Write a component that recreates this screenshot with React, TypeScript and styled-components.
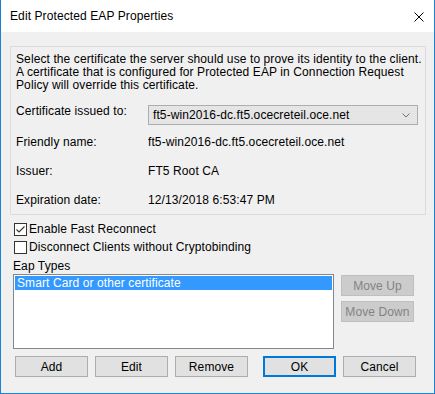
import React from "react";
import styled, { createGlobalStyle } from "styled-components";

const Global = createGlobalStyle`
  html, body { margin: 0; padding: 0; background: #ffffff; }
  body { font-family: "Liberation Sans", Arial, sans-serif; font-size: 12px; letter-spacing: 0.1px; color: #000; }
  * { box-sizing: border-box; }
`;

const Window = styled.div`
  width: 435px;
  height: 394px;
  display: flex;
  flex-direction: column;
  background: #f0f0f0;
  border: 1px solid #1883d7;
  border-top: none;
`;

const TitleBar = styled.div`
  height: 32px;
  flex: none;
  background: #ffffff;
  display: flex;
  align-items: center;
  padding-left: 9px;
  padding-right: 10px;
  font-size: 12px;
`;

const TitleText = styled.div`
  flex: 1;
  margin-top: -1px;
`;

const CloseIcon = styled.svg`
  width: 10px;
  height: 10px;
  margin-top: 1px;
`;

const Body = styled.div`
  flex: 1;
  padding: 14px 0 0 9px;
  display: flex;
  flex-direction: column;
`;

const Group = styled.div`
  width: 416px;
  height: 169px;
  border: 1px solid #dcdcdc;
  padding: 6px 0 0 5px;
  display: flex;
  flex-direction: column;
`;

const Intro = styled.div`
  line-height: 13px;
`;

const Fields = styled.div`
  margin-top: 13px;
  display: grid;
  grid-template-columns: 132px 270px;
  grid-template-rows: 30px 29px 29px 29px;
  align-items: start;
`;

const FieldLabel = styled.div<{ $dy?: number }>`
  line-height: 15px;
  margin-top: ${(p) => p.$dy ?? 0}px;
`;

const FieldValue = styled.div`
  line-height: 15px;
`;

const Combo = styled.div`
  height: 20px;
  border: 1px solid #adadad;
  background: #e5e5e5;
  display: flex;
  align-items: center;
  padding: 0 4px 0 4px;
`;

const ComboText = styled.div`
  flex: 1;
`;

const Chevron = styled.svg`
  width: 8px;
  height: 5px;
  margin-right: 3px;
`;

const CheckRow = styled.div<{ $mt: number }>`
  display: flex;
  align-items: center;
  margin-top: ${(p) => p.$mt}px;
  margin-left: 4px;
  height: 13px;
`;

const Box = styled.div`
  width: 13px;
  height: 13px;
  border: 1px solid #333333;
  background: #ffffff;
  display: flex;
  align-items: center;
  justify-content: center;
`;

const CheckLabel = styled.div`
  margin-left: 2px;
  line-height: 15px;
`;

const SectionLabel = styled.div`
  margin-top: 5px;
  margin-left: 3px;
  line-height: 15px;
`;

const ListArea = styled.div`
  display: flex;
  margin-left: 3px;
`;

const ListBox = styled.div`
  width: 321px;
  height: 75px;
  border: 1px solid #828790;
  background: #ffffff;
  padding: 1px;
`;

const ListItem = styled.div<{ $selected?: boolean }>`
  height: 14px;
  line-height: 14px;
  padding-left: 2px;
  background: ${(p) => (p.$selected ? "#3399ff" : "transparent")};
  color: ${(p) => (p.$selected ? "#ffffff" : "#000000")};
`;

const SideButtons = styled.div`
  display: flex;
  flex-direction: column;
  gap: 5px;
  margin-left: 7px;
  margin-top: 1px;
`;

const Button = styled.div<{ $disabled?: boolean; $default?: boolean }>`
  width: 73px;
  height: 21px;
  display: flex;
  align-items: center;
  justify-content: center;
  background: ${(p) => (p.$disabled ? "#cccccc" : "#e1e1e1")};
  border: ${(p) =>
    p.$default ? "2px solid #0078d7" : p.$disabled ? "1px solid #bfbfbf" : "1px solid #adadad"};
  color: ${(p) => (p.$disabled ? "#838383" : "#000000")};
`;

const ButtonBar = styled.div`
  display: flex;
  margin-top: 7px;
  margin-left: 5px;
`;

const ButtonGroup = styled.div<{ $ml?: number }>`
  display: flex;
  gap: 7px;
  margin-left: ${(p) => p.$ml ?? 0}px;
`;

export default function App() {
  return (
    <>
      <Global />
      <Window>
        <TitleBar>
          <TitleText>Edit Protected EAP Properties</TitleText>
          <CloseIcon viewBox="0 0 10 10">
            <path d="M0.5 0.5 L9.5 9.5 M9.5 0.5 L0.5 9.5" stroke="#000" strokeWidth="1" fill="none" />
          </CloseIcon>
        </TitleBar>
        <Body>
          <Group>
            <Intro>
              Select the certificate the server should use to prove its identity to the client.
              <br />
              A certificate that is configured for Protected EAP in Connection Request
              <br />
              Policy will override this certificate.
            </Intro>
            <Fields>
              <FieldLabel $dy={-1}>Certificate issued to:</FieldLabel>
              <Combo>
                <ComboText>ft5-win2016-dc.ft5.ocecreteil.oce.net</ComboText>
                <Chevron viewBox="0 0 8 5">
                  <path d="M0.5 0.5 L4 4 L7.5 0.5" stroke="#707070" strokeWidth="1" fill="none" />
                </Chevron>
              </Combo>
              <FieldLabel>Friendly name:</FieldLabel>
              <FieldValue>ft5-win2016-dc.ft5.ocecreteil.oce.net</FieldValue>
              <FieldLabel>Issuer:</FieldLabel>
              <FieldValue>FT5 Root CA</FieldValue>
              <FieldLabel>Expiration date:</FieldLabel>
              <FieldValue>12/13/2018 6:53:47 PM</FieldValue>
            </Fields>
          </Group>
          <CheckRow $mt={8}>
            <Box>
              <svg width="11" height="11" viewBox="0 0 11 11">
                <path d="M1.5 5.5 L4 8 L9.5 2.5" stroke="#333" strokeWidth="1.1" fill="none" />
              </svg>
            </Box>
            <CheckLabel>Enable Fast Reconnect</CheckLabel>
          </CheckRow>
          <CheckRow $mt={5}>
            <Box />
            <CheckLabel>Disconnect Clients without Cryptobinding</CheckLabel>
          </CheckRow>
          <SectionLabel>Eap Types</SectionLabel>
          <ListArea>
            <ListBox>
              <ListItem $selected>Smart Card or other certificate</ListItem>
            </ListBox>
            <SideButtons>
              <Button $disabled>Move Up</Button>
              <Button $disabled>Move Down</Button>
            </SideButtons>
          </ListArea>
          <ButtonBar>
            <ButtonGroup>
              <Button>Add</Button>
              <Button>Edit</Button>
              <Button>Remove</Button>
            </ButtonGroup>
            <ButtonGroup $ml={15}>
              <Button $default>OK</Button>
              <Button>Cancel</Button>
            </ButtonGroup>
          </ButtonBar>
        </Body>
      </Window>
    </>
  );
}
